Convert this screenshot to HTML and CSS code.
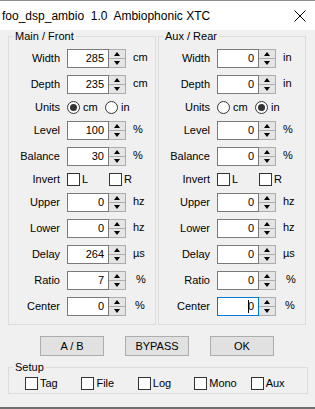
FILE: index.html
```html
<!DOCTYPE html>
<html lang="en">
<head>
    <meta charset="UTF-8">
    <title>foo_dsp_ambio 1.0 Ambiophonic XTC</title>
    <link rel="stylesheet" href="styles.css">
</head>
<body>
<div class="window">
    <div class="titlebar">
        <span class="title">foo_dsp_ambio  1.0  Ambiophonic XTC</span>
        <svg class="close" width="12" height="12" viewBox="0 0 12 12"><path d="M0.5 0.5 L11.5 11.5 M11.5 0.5 L0.5 11.5" stroke="#000" stroke-width="1" fill="none"/></svg>
    </div>
    <div class="dialog">
        <div class="groups">
            <fieldset class="group">
                <legend>Main / Front</legend>
                <div class="row"><label>Width</label><div class="edit">285</div><div class="spin"><span class="up"></span><span class="down"></span></div><span class="unit">cm</span></div>
                <div class="row"><label>Depth</label><div class="edit">235</div><div class="spin"><span class="up"></span><span class="down"></span></div><span class="unit">cm</span></div>
                <div class="row small"><label>Units</label><span class="opt radio-opt"><i class="radio checked"></i>cm</span><span class="opt"><i class="radio"></i>in</span></div>
                <div class="row"><label>Level</label><div class="edit">100</div><div class="spin"><span class="up"></span><span class="down"></span></div><span class="unit">%</span></div>
                <div class="row"><label>Balance</label><div class="edit">30</div><div class="spin"><span class="up"></span><span class="down"></span></div><span class="unit">%</span></div>
                <div class="row small"><label>Invert</label><span class="opt check-opt"><i class="check"></i>L</span><span class="opt"><i class="check"></i>R</span></div>
                <div class="row"><label>Upper</label><div class="edit">0</div><div class="spin"><span class="up"></span><span class="down"></span></div><span class="unit">hz</span></div>
                <div class="row"><label>Lower</label><div class="edit">0</div><div class="spin"><span class="up"></span><span class="down"></span></div><span class="unit">hz</span></div>
                <div class="row"><label>Delay</label><div class="edit">264</div><div class="spin"><span class="up"></span><span class="down"></span></div><span class="unit">µs</span></div>
                <div class="row"><label>Ratio</label><div class="edit">7</div><div class="spin"><span class="up"></span><span class="down"></span></div><span class="unit ratio">%</span></div>
                <div class="row"><label>Center</label><div class="edit">0</div><div class="spin"><span class="up"></span><span class="down"></span></div><span class="unit center">%</span></div>
            </fieldset>
            <fieldset class="group">
                <legend>Aux / Rear</legend>
                <div class="row"><label>Width</label><div class="edit">0</div><div class="spin"><span class="up"></span><span class="down"></span></div><span class="unit">in</span></div>
                <div class="row"><label>Depth</label><div class="edit">0</div><div class="spin"><span class="up"></span><span class="down"></span></div><span class="unit">in</span></div>
                <div class="row small"><label>Units</label><span class="opt radio-opt"><i class="radio"></i>cm</span><span class="opt"><i class="radio checked"></i>in</span></div>
                <div class="row"><label>Level</label><div class="edit">0</div><div class="spin"><span class="up"></span><span class="down"></span></div><span class="unit">%</span></div>
                <div class="row"><label>Balance</label><div class="edit">0</div><div class="spin"><span class="up"></span><span class="down"></span></div><span class="unit">%</span></div>
                <div class="row small"><label>Invert</label><span class="opt check-opt"><i class="check"></i>L</span><span class="opt"><i class="check"></i>R</span></div>
                <div class="row"><label>Upper</label><div class="edit">0</div><div class="spin"><span class="up"></span><span class="down"></span></div><span class="unit">hz</span></div>
                <div class="row"><label>Lower</label><div class="edit">0</div><div class="spin"><span class="up"></span><span class="down"></span></div><span class="unit">hz</span></div>
                <div class="row"><label>Delay</label><div class="edit">0</div><div class="spin"><span class="up"></span><span class="down"></span></div><span class="unit">µs</span></div>
                <div class="row"><label>Ratio</label><div class="edit">0</div><div class="spin"><span class="up"></span><span class="down"></span></div><span class="unit ratio">%</span></div>
                <div class="row"><label>Center</label><div class="edit focused"><span class="caret"></span>0</div><div class="spin"><span class="up"></span><span class="down"></span></div><span class="unit center">%</span></div>
            </fieldset>
        </div>
        <div class="buttons">
            <button>A / B</button>
            <button>BYPASS</button>
            <button>OK</button>
        </div>
        <fieldset class="setup">
            <legend>Setup</legend>
            <div class="setup-row">
                <span class="opt"><i class="check"></i>Tag</span>
                <span class="opt"><i class="check"></i>File</span>
                <span class="opt"><i class="check"></i>Log</span>
                <span class="opt"><i class="check"></i>Mono</span>
                <span class="opt"><i class="check"></i>Aux</span>
            </div>
        </fieldset>
    </div>
</div>
</body>
</html>
```

FILE: styles.css
```css
body {
    margin: 0;
    background: #f0f0f0;
    font-family: "Liberation Sans", Arial, sans-serif;
    font-size: 11px;
    color: #000;
}
.window {
    width: 315px;
    height: 409px;
    box-sizing: border-box;
    border-top: 1px solid #8c8c8c;
    border-bottom: 2px solid #707070;
    display: flex;
    flex-direction: column;
}
.titlebar {
    height: 29px;
    background: #fff;
    display: flex;
    align-items: center;
    justify-content: space-between;
    padding-left: 2px;
}
.title {
    font-family: "Liberation Sans", Arial, sans-serif;
    font-size: 12px;
    white-space: pre;
}
.close {
    margin-right: 9px;
}
.dialog {
    flex: 1;
    padding-left: 8px;
}
.groups {
    display: flex;
    gap: 2px;
}
fieldset {
    margin: 0;
    border: 1px solid #dcdcdc;
    min-width: 0;
}
legend {
    padding: 0 2px;
    margin-left: 4px;
    line-height: 13px;
}
.group {
    width: 148px;
    box-sizing: border-box;
    padding: 2px 0 5px;
}
.row {
    height: 26px;
    display: flex;
    align-items: center;
}
.row.small {
    height: 20px;
}
.row label {
    width: 51px;
    margin-right: 7px;
    text-align: right;
}
.edit {
    width: 42px;
    height: 19px;
    box-sizing: border-box;
    border: 1px solid #7a7a7a;
    background: #fff;
    text-align: right;
    padding-right: 4px;
    line-height: 17px;
}
.edit.focused {
    border-color: #0078d7;
}
.caret {
    display: inline-block;
    width: 1px;
    height: 13px;
    background: #000;
    vertical-align: -3px;
    margin-right: -1px;
}
.spin {
    width: 17px;
    height: 19px;
    box-sizing: border-box;
    border: 1px solid #adadad;
    border-left: none;
    background: #e5e5e5;
    display: flex;
    flex-direction: column;
}
.spin span {
    flex: 1;
    display: flex;
    align-items: center;
    justify-content: center;
}
.spin .up {
    border-bottom: 1px solid #adadad;
}
.spin span::before {
    content: "";
    border-left: 3px solid transparent;
    border-right: 3px solid transparent;
}
.spin .up::before {
    border-bottom: 4px solid #000;
}
.spin .down::before {
    border-top: 4px solid #000;
}
.unit {
    margin-left: 7px;
    margin-top: -2px;
}
.unit.ratio {
    margin-left: 10px;
}
.unit.center {
    margin-left: 9px;
}
.opt {
    display: flex;
    align-items: center;
}
.radio-opt {
    width: 38px;
}
.check-opt {
    width: 42px;
}
.radio, .check {
    width: 13px;
    height: 13px;
    box-sizing: border-box;
    border: 1px solid #333;
    background: #fff;
    margin-right: 3px;
    display: flex;
    align-items: center;
    justify-content: center;
}
.radio {
    border-radius: 50%;
}
.radio.checked::after {
    content: "";
    width: 7px;
    height: 7px;
    border-radius: 50%;
    background: #333;
}
.check {
    margin-right: 2px;
}
.buttons {
    display: flex;
    gap: 21px;
    padding-left: 32px;
    margin-top: 11px;
}
button {
    width: 64px;
    height: 20px;
    margin: 0;
    padding: 0;
    background: #e1e1e1;
    border: 1px solid #adadad;
    font-family: "Liberation Sans", Arial, sans-serif;
    font-size: 11px;
    color: #000;
}
.setup {
    width: 300px;
    box-sizing: border-box;
    margin-top: 5px;
    padding: 0 0 1px;
}
.setup-row {
    height: 18px;
    display: flex;
    align-items: center;
    padding-left: 16px;
}
.setup-row .opt {
    width: 57px;
}
```
